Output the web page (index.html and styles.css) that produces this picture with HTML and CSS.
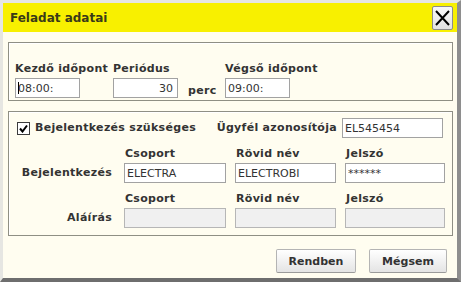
FILE: index.html
```html
<!DOCTYPE html>
<html>
<head>
  <title>Feladat adatai</title>
  <link rel="stylesheet" href="styles.css">
</head>
<body>
  <div class="dialog">
    <div class="titlebar">
      <span class="title">Feladat adatai</span>
      <button class="close" type="button">
        <svg width="15" height="16" viewBox="0 0 15 16"><path d="M1 1 L14 15 M14 1 L1 15" stroke="#000" stroke-width="2" fill="none"/></svg>
      </button>
    </div>
    <div class="content">
      <div class="box times">
        <label class="lbl">Kezdő időpont</label>
        <label class="lbl">Periódus</label>
        <span></span>
        <label class="lbl">Végső időpont</label>
        <span class="caret-wrap"><input class="field" value="08:00:"></span>
        <input class="field num" value="30">
        <span class="unit">perc</span>
        <input class="field" value="09:00:">
      </div>

      <div class="box login">
        <div class="check-row">
          <label class="check">
            <span class="checkbox"><svg width="9" height="9" viewBox="0 0 9 9"><path d="M1 4.5 L3.5 7.5 L8 1.5" stroke="#000" stroke-width="2" fill="none"/></svg></span>
            <span class="lbl">Bejelentkezés szükséges</span>
          </label>
          <span class="client">
            <span class="lbl">Ügyfél azonosítója</span>
            <input class="field client-id" value="EL545454">
          </span>
        </div>

        <span></span>
        <span class="lbl head">Csoport</span>
        <span class="lbl head">Rövid név</span>
        <span class="lbl head">Jelszó</span>

        <span class="lbl row-lbl">Bejelentkezés</span>
        <input class="field" value="ELECTRA">
        <input class="field" value="ELECTROBI">
        <input class="field" value="******">

        <span></span>
        <span class="lbl head">Csoport</span>
        <span class="lbl head">Rövid név</span>
        <span class="lbl head">Jelszó</span>

        <span class="lbl row-lbl">Aláírás</span>
        <input class="field off" disabled>
        <input class="field off" disabled>
        <input class="field off" disabled>
      </div>

      <div class="actions">
        <button class="btn" type="button">Rendben</button>
        <button class="btn btn-cancel" type="button">Mégsem</button>
      </div>
    </div>
  </div>
</body>
</html>
```

FILE: styles.css
```css
html, body {
  margin: 0;
  width: 461px;
  height: 282px;
  background: #fffdf0;
  font-family: "DejaVu Sans", Verdana, sans-serif;
  font-size: 11px;
  color: #333;
}

.dialog {
  box-sizing: border-box;
  width: 461px;
  height: 282px;
  border-style: solid;
  border-width: 3px 4px 4px 3px;
  border-color: #e6e6e2 #8e8e8e #6e6e6e #e6e6e2;
  background: #fffdf0;
  display: flex;
  flex-direction: column;
}

.titlebar {
  height: 29px;
  background: #f8f000;
  display: flex;
  align-items: center;
  justify-content: space-between;
  padding: 0 4px 0 7px;
}

.title {
  font-size: 12px;
  font-weight: bold;
  color: #3a3a18;
}

.close {
  box-sizing: border-box;
  width: 21px;
  height: 24px;
  padding: 0;
  margin: 0;
  border: 1px solid #8c8c8c;
  border-radius: 2px;
  background: linear-gradient(#f8f8f8, #e2e2e2);
  display: flex;
  align-items: center;
  justify-content: center;
}

.content {
  flex: 1;
  padding: 10px 4px 0 5px;
}

.box {
  border: 1px solid #8f8f84;
  box-shadow: inset 1px 1px 0 #fff;
}

.lbl {
  font-weight: bold;
  line-height: 14px;
  letter-spacing: 0.3px;
  white-space: nowrap;
}

.field {
  box-sizing: border-box;
  height: 20px;
  margin: 0;
  padding: 0 2px;
  border: 1px solid #a2a2a2;
  background: #fff;
  font-family: "DejaVu Sans", Verdana, sans-serif;
  font-size: 11px;
  color: #333;
  outline: none;
}

.field.off {
  background: #f0f0f0;
  border-color: #b6b6b6;
}

.times {
  height: 59px;
  box-sizing: border-box;
  padding: 19px 6px 0 6px;
  display: grid;
  grid-template-columns: 98px 75px 37px auto;
  grid-template-rows: 14px 20px;
  row-gap: 2px;
}

.times .field {
  width: 65px;
}

.num {
  text-align: right;
  padding-right: 4px;
}

.unit {
  font-weight: bold;
  letter-spacing: 0.3px;
  align-self: end;
  line-height: 14px;
}

.caret-wrap {
  position: relative;
  width: 65px;
}

.caret-wrap::after {
  content: "";
  position: absolute;
  left: 3px;
  top: 4px;
  width: 1px;
  height: 12px;
  background: #000;
}

.login {
  margin-top: 10px;
  height: 125px;
  box-sizing: border-box;
  padding: 6px 6px 0 6px;
  display: grid;
  grid-template-columns: 100px 102px 101px 100px;
  grid-template-rows: 20px 25px 20px 25px 20px;
  column-gap: 9px;
}

.check-row {
  grid-column: 1 / -1;
  display: flex;
  align-items: center;
  justify-content: space-between;
}

.check {
  display: flex;
  align-items: center;
  gap: 5px;
  margin-left: 2px;
}

.checkbox {
  box-sizing: border-box;
  width: 13px;
  height: 13px;
  border: 1px solid #3c3c3c;
  background: #fff;
  display: flex;
  align-items: center;
  justify-content: center;
}

.client {
  display: flex;
  align-items: center;
  gap: 5px;
  margin-right: 2px;
}

.login .field {
  width: 100%;
}

.login .client-id {
  width: 101px;
  flex: none;
}

.head {
  align-self: end;
  padding: 0 0 2px 1px;
}

.row-lbl {
  align-self: center;
  text-align: right;
  padding-right: 3px;
}

.actions {
  display: flex;
  justify-content: flex-end;
  gap: 13px;
  margin-top: 13px;
  padding-right: 6px;
}

.btn {
  box-sizing: border-box;
  width: 80px;
  height: 24px;
  margin: 0;
  border: 1px solid #b4b4b4;
  border-bottom-color: #9a9a9a;
  border-radius: 2px;
  background: linear-gradient(#ffffff, #e4e4e4);
  font-family: "DejaVu Sans", Verdana, sans-serif;
  font-size: 11px;
  font-weight: bold;
  color: #333;
}

.btn-cancel {
  width: 78px;
}
```
